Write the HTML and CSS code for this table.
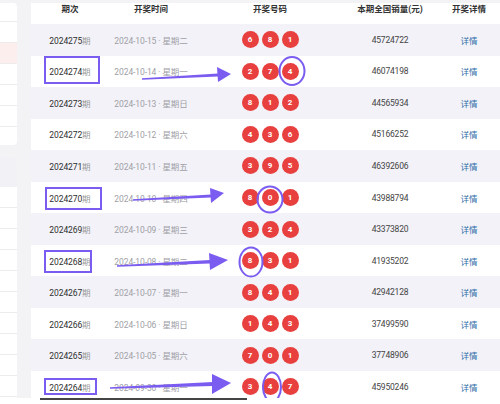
FILE: index.html
```html
<!DOCTYPE html>
<html lang="zh-CN">
<head>
<meta charset="utf-8">
<title>开奖记录</title>
<link rel="stylesheet" href="styles.css">
</head>
<body>
<div class="page">
  <aside class="side">
    <div class="card card-top">
      <div class="sline"></div><div class="sline pink"></div><div class="sline"></div><div class="sline"></div><div class="sline"></div><div class="sline"></div>
    </div>
    <div class="card card-bottom">
      <div class="shead"></div>
      <div class="sline"></div><div class="sline"></div><div class="sline"></div><div class="sline"></div><div class="sline"></div><div class="sline"></div><div class="sline"></div><div class="sline"></div><div class="sline"></div><div class="sline"></div>
    </div>
  </aside>
  <main class="board">
    <div class="row head">
      <div class="c1">期次</div><div class="c2">开奖时间</div><div class="c3">开奖号码</div><div class="c4">本期全国销量(元)</div><div class="c5">开奖详情</div>
    </div>
    <div class="row alt"><div class="c1 issue">2024275<span>期</span></div><div class="c2 date">2024-10-15 · 星期二</div><div class="c3 balls"><i>6</i><i>8</i><i>1</i></div><div class="c4 sales">45724722</div><div class="c5 link">详情</div></div>
    <div class="row"><div class="c1 issue">2024274<span>期</span></div><div class="c2 date">2024-10-14 · 星期一</div><div class="c3 balls"><i>2</i><i>7</i><i>4</i></div><div class="c4 sales">46074198</div><div class="c5 link">详情</div></div>
    <div class="row alt"><div class="c1 issue">2024273<span>期</span></div><div class="c2 date">2024-10-13 · 星期日</div><div class="c3 balls"><i>8</i><i>1</i><i>2</i></div><div class="c4 sales">44565934</div><div class="c5 link">详情</div></div>
    <div class="row"><div class="c1 issue">2024272<span>期</span></div><div class="c2 date">2024-10-12 · 星期六</div><div class="c3 balls"><i>4</i><i>3</i><i>6</i></div><div class="c4 sales">45166252</div><div class="c5 link">详情</div></div>
    <div class="row alt"><div class="c1 issue">2024271<span>期</span></div><div class="c2 date">2024-10-11 · 星期五</div><div class="c3 balls"><i>3</i><i>9</i><i>5</i></div><div class="c4 sales">46392606</div><div class="c5 link">详情</div></div>
    <div class="row"><div class="c1 issue">2024270<span>期</span></div><div class="c2 date">2024-10-10 · 星期四</div><div class="c3 balls"><i>8</i><i>0</i><i>1</i></div><div class="c4 sales">43988794</div><div class="c5 link">详情</div></div>
    <div class="row alt"><div class="c1 issue">2024269<span>期</span></div><div class="c2 date">2024-10-09 · 星期三</div><div class="c3 balls"><i>3</i><i>2</i><i>4</i></div><div class="c4 sales">43373820</div><div class="c5 link">详情</div></div>
    <div class="row"><div class="c1 issue">2024268<span>期</span></div><div class="c2 date">2024-10-08 · 星期二</div><div class="c3 balls"><i>8</i><i>3</i><i>1</i></div><div class="c4 sales">41935202</div><div class="c5 link">详情</div></div>
    <div class="row alt"><div class="c1 issue">2024267<span>期</span></div><div class="c2 date">2024-10-07 · 星期一</div><div class="c3 balls"><i>8</i><i>4</i><i>1</i></div><div class="c4 sales">42942128</div><div class="c5 link">详情</div></div>
    <div class="row"><div class="c1 issue">2024266<span>期</span></div><div class="c2 date">2024-10-06 · 星期日</div><div class="c3 balls"><i>1</i><i>4</i><i>3</i></div><div class="c4 sales">37499590</div><div class="c5 link">详情</div></div>
    <div class="row alt"><div class="c1 issue">2024265<span>期</span></div><div class="c2 date">2024-10-05 · 星期六</div><div class="c3 balls"><i>7</i><i>0</i><i>1</i></div><div class="c4 sales">37748906</div><div class="c5 link">详情</div></div>
    <div class="row"><div class="c1 issue">2024264<span>期</span></div><div class="c2 date">2024-09-30 · 星期一</div><div class="c3 balls"><i>3</i><i>4</i><i>7</i></div><div class="c4 sales">45950246</div><div class="c5 link">详情</div></div>
  </main>
  <svg class="annot" width="500" height="404" viewBox="0 0 500 404">
    <g fill="none" stroke="#7b5cf0" stroke-width="2">
      <rect x="45" y="57" width="54" height="26"/>
      <rect x="46" y="188" width="55" height="21"/>
      <rect x="45" y="251" width="46" height="21"/>
      <rect x="45" y="379" width="51" height="15"/>
      <ellipse cx="292" cy="71" rx="12.5" ry="14"/>
      <ellipse cx="270" cy="199.5" rx="12.5" ry="13"/>
      <ellipse cx="251" cy="262" rx="11.5" ry="14.5"/>
      <ellipse cx="272" cy="387" rx="9" ry="14.5"/>
    </g>
    <g fill="#7b5cf0">
      <polygon points="142,78.2 218,73.5 218,76.5 142,79.8"/>
      <polygon points="217,67 231,74 218,82"/>
      <polygon points="133,199.2 211,194.5 211,197.5 133,200.8"/>
      <polygon points="210,188 224,193 211,203"/>
      <polygon points="117,265.2 210,260 210,263.5 117,266.8"/>
      <polygon points="209,253 228,260 210,270"/>
      <polygon points="110,387.2 213,382 213,386 110,388.8"/>
      <polygon points="212,374 231,383 212,394"/>
    </g>
  </svg>
</div>
<div class="foot"><div class="bar"></div></div>
</body>
</html>
```

FILE: styles.css
```css
* { box-sizing: border-box; }
html, body { margin: 0; padding: 0; }
body {
  width: 500px;
  height: 404px;
  overflow: hidden;
  background: #ffffff;
  font-family: "Roboto", "Noto Sans CJK SC", sans-serif;
}
.page {
  position: relative;
  height: 398px;
  overflow: hidden;
  background: #f3f3f5;
  display: flex;
  gap: 14px;
  padding-top: 3px;
}
.side {
  width: 17px;
  flex: none;
  display: flex;
  flex-direction: column;
  gap: 13px;
}
.card {
  background: #ffffff;
  border-radius: 0 4px 4px 0;
}
.card-top {
  height: 142px;
  padding-top: 18px;
}
.card-top .sline {
  height: 21px;
  border-top: 1px solid #ececef;
}
.card-top .sline.pink { background: #fdeeee; }
.card-bottom {
  flex: 1;
  border-radius: 0 4px 0 0;
}
.shead {
  height: 29px;
  background: #f1f1f6;
  border-radius: 0 4px 0 0;
}
.card-bottom .sline {
  height: 21px;
  border-bottom: 1px solid #ececef;
}
.board {
  flex: 1;
  background: #ffffff;
  display: flex;
  flex-direction: column;
}
.row {
  display: grid;
  grid-template-columns: 78px 84px 154px 86px 67px;
  align-items: center;
  height: 31.55px;
  flex: none;
  font-size: 8.5px;
  color: #333;
}
.row.alt { background: #f2f2f8; }
.row.head {
  height: 21px;
  font-weight: 700;
  color: #333;
  font-size: 8.5px;
  line-height: 12px;
  align-items: start;
}
.c1, .c2, .c3, .c4, .c5 { text-align: center; white-space: nowrap; }
.c5 { padding-left: 5px; }
.issue { color: #2e2e2e; font-weight: 400; letter-spacing: -0.1px; }
.issue span { color: #999; letter-spacing: 0; }
.date { color: #a0a0a6; letter-spacing: -0.1px; }
.balls {
  display: flex;
  justify-content: center;
  gap: 3px;
}
.balls i {
  font-style: normal;
  width: 17px;
  height: 17px;
  border-radius: 50%;
  background: #e8403e;
  color: #fff;
  font-size: 8px;
  font-weight: 700;
  display: grid;
  place-items: center;
}
.sales { color: #444; letter-spacing: -0.2px; }
.link { color: #2f6ea8; }
.annot {
  position: absolute;
  left: 0;
  top: 0;
  pointer-events: none;
}
.foot {
  height: 6px;
  background: #fff;
  padding-left: 40px;
}
.bar {
  width: 207px;
  height: 2px;
  background: #444;
}
```
